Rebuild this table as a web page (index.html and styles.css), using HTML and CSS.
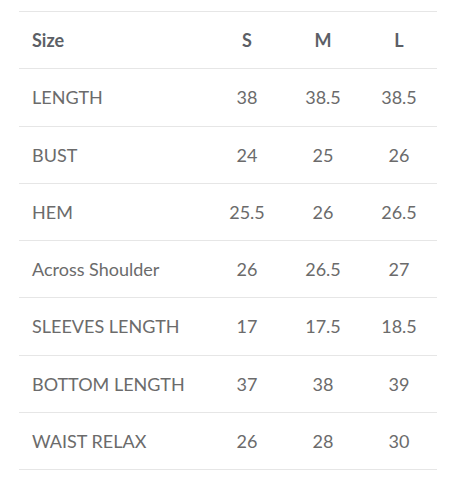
FILE: index.html
```html
<!DOCTYPE html>
<html>
<head>
<meta charset="utf-8">
<link rel="stylesheet" href="styles.css">
</head>
<body>
<div class="wrap">
<table class="size-table">
  <thead>
    <tr><th class="label">Size</th><th>S</th><th>M</th><th>L</th></tr>
  </thead>
  <tbody>
    <tr><td class="label">LENGTH</td><td>38</td><td>38.5</td><td>38.5</td></tr>
    <tr><td class="label">BUST</td><td>24</td><td>25</td><td>26</td></tr>
    <tr><td class="label">HEM</td><td>25.5</td><td>26</td><td>26.5</td></tr>
    <tr><td class="label">Across Shoulder</td><td>26</td><td>26.5</td><td>27</td></tr>
    <tr><td class="label">SLEEVES LENGTH</td><td>17</td><td>17.5</td><td>18.5</td></tr>
    <tr><td class="label">BOTTOM LENGTH</td><td>37</td><td>38</td><td>39</td></tr>
    <tr><td class="label">WAIST RELAX</td><td>26</td><td>28</td><td>30</td></tr>
  </tbody>
</table>
</div>
</body>
</html>
```

FILE: styles.css
```css
html, body {
  margin: 0;
  padding: 0;
  background: #ffffff;
}
.wrap {
  padding: 11px 25px 0 19px;
}
.size-table {
  width: 418px;
  border-collapse: collapse;
  table-layout: fixed;
  font-family: "Lato", "Liberation Sans", sans-serif;
  font-size: 18px;
  color: #6b6b6b;
  border-top: 1px solid #e6e6e6;
}
.size-table th,
.size-table td {
  height: 56.25px;
  padding: 0;
  text-align: center;
  vertical-align: middle;
  border-bottom: 1px solid #e6e6e6;
  width: 76px;
}
.size-table th {
  font-weight: 700;
  color: #5c5f66;
}
.size-table .label {
  width: 177px;
  padding-left: 13px;
  text-align: left;
}
```
